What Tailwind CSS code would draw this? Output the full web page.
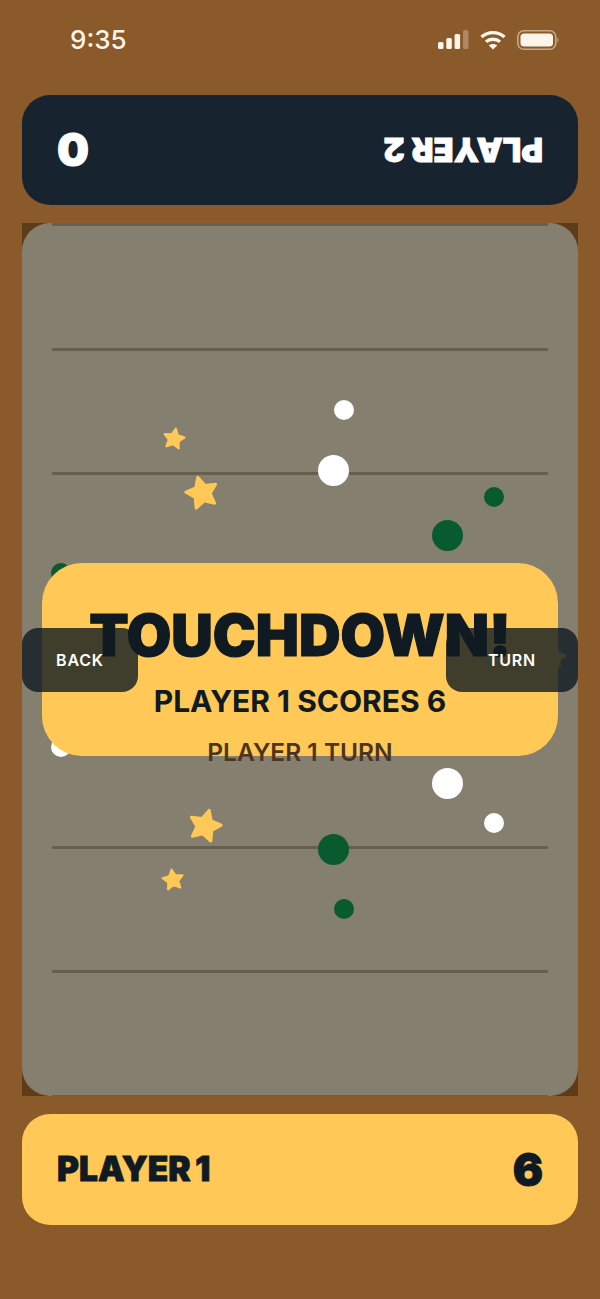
<!DOCTYPE html>
<html lang="en">
<head>
    <meta charset="UTF-8">
    <meta name="viewport" content="width=device-width, initial-scale=1.0">
    <title>Touchdown</title>
    <script src="https://cdn.jsdelivr.net/npm/@tailwindcss/browser@4"></script>
</head>
<body class="bg-[#8a5a2b] font-['Inter',sans-serif] [font-optical-sizing:none] overflow-hidden">
    <div class="w-[600px] h-[1299px] flex flex-col">
        <!-- status bar -->
        <div class="relative h-[95px] shrink-0 pl-[70px] pt-[25px] text-[#fdf5ea]">
            <span class="text-[26px] leading-[30px] font-medium">9:35</span>
            <div class="absolute left-[438px] top-[30px] flex items-start gap-[11px]">
                <svg width="31" height="19" viewBox="0 0 31 19">
                    <rect x="0" y="12" width="5.500" height="7" rx="1.500" fill="#fdf5ea"/>
                    <rect x="8.300" y="8" width="5.500" height="11" rx="1.500" fill="#fdf5ea"/>
                    <rect x="16.600" y="4" width="5.500" height="15" rx="1.500" fill="#fdf5ea"/>
                    <rect x="25" y="0" width="5.500" height="19" rx="1.500" fill="#fdf5ea" fill-opacity="0.3"/>
                </svg>
                <svg width="26" height="20" viewBox="0 0 26 20" fill="none" stroke="#fdf5ea" stroke-width="3.400">
                    <path d="M1.500 7C8 1.200 18 1.200 24.500 7"/>
                    <path d="M6 11.800C10 8.400 16 8.400 20 11.800"/>
                    <path d="M13 19.500L8.800 15.400C11 13.400 15 13.400 17.200 15.400Z" fill="#fdf5ea" stroke="none"/>
                </svg>
                <svg width="42" height="20" viewBox="0 0 42 20" fill="none">
                    <rect x="0.800" y="0.800" width="38" height="18.400" rx="6" stroke="#fdf5ea" stroke-opacity="0.5" stroke-width="1.600"/>
                    <rect x="3.500" y="3.500" width="32.500" height="13" rx="3.500" fill="#fdf5ea"/>
                    <path d="M40.500 7.500C42 8.200 42 11.800 40.500 12.500Z" fill="#fdf5ea" fill-opacity="0.5"/>
                </svg>
            </div>
        </div>

        <div class="px-[22px] flex flex-col gap-[18px]">
            <!-- player 2 -->
            <div class="h-[110px] rounded-[28px] bg-[#172430] text-white flex items-center justify-between px-[35px] rotate-180">
                <span class="text-[33px] leading-none font-black [-webkit-text-stroke:0.8px_#ffffff]">PLAYER 2</span>
                <span class="text-[45px] leading-none font-black [-webkit-text-stroke:1px_#ffffff]">0</span>
            </div>

            <!-- field -->
            <div class="relative h-[873px] bg-[#5f3c18]">
                <div class="relative h-full rounded-[28px] bg-[#857f6f] overflow-hidden">
                    <div class="h-[875px] flex flex-col justify-between px-[30px]">
                        <div class="h-[3px] bg-[#665f4e]"></div>
                        <div class="h-[3px] bg-[#665f4e]"></div>
                        <div class="h-[3px] bg-[#665f4e]"></div>
                        <div class="h-[3px] bg-[#665f4e]"></div>
                        <div class="h-[3px] bg-[#665f4e]"></div>
                        <div class="h-[3px] bg-[#665f4e]"></div>
                        <div class="h-[3px] bg-[#665f4e]"></div>
                        <div class="h-[3px] bg-[#665f4e]"></div>
                    </div>

                    <!-- markers -->
                    <div class="absolute left-[312px] top-[177px] size-[20px] rounded-full bg-white"></div>
                    <div class="absolute left-[296px] top-[232px] size-[31px] rounded-full bg-white"></div>
                    <div class="absolute left-[462px] top-[264px] size-[20px] rounded-full bg-[#0a5a30]"></div>
                    <div class="absolute left-[410px] top-[297px] size-[31px] rounded-full bg-[#0a5a30]"></div>
                    <div class="absolute left-[29px] top-[340px] size-[20px] rounded-full bg-[#0a5a30]"></div>
                    <div class="absolute left-[29px] top-[514px] size-[20px] rounded-full bg-white"></div>
                    <div class="absolute left-[410px] top-[545px] size-[31px] rounded-full bg-white"></div>
                    <div class="absolute left-[462px] top-[590px] size-[20px] rounded-full bg-white"></div>
                    <div class="absolute left-[296px] top-[611px] size-[31px] rounded-full bg-[#0a5a30]"></div>
                    <div class="absolute left-[312px] top-[676px] size-[20px] rounded-full bg-[#0a5a30]"></div>

                    <!-- stars -->
                    <svg class="absolute left-[138px] top-[202px]" width="28" height="28" viewBox="-14 -14 28 28"><polygon transform="rotate(10) scale(1.150)" points="0,-9.200 2.700,-3.720 8.750,-2.840 4.380,1.420 5.410,7.440 0,4.600 -5.410,7.440 -4.380,1.420 -8.750,-2.840 -2.700,-3.720" fill="#ffc857" stroke="#ffc857" stroke-width="1.800" stroke-linejoin="round"/></svg>
                    <svg class="absolute left-[158px] top-[248px]" width="44" height="44" viewBox="-22 -22 44 44"><polygon transform="rotate(-15) scale(1.750)" points="0,-9.200 2.700,-3.720 8.750,-2.840 4.380,1.420 5.410,7.440 0,4.600 -5.410,7.440 -4.380,1.420 -8.750,-2.840 -2.700,-3.720" fill="#ffc857" stroke="#ffc857" stroke-width="1.800" stroke-linejoin="round"/></svg>
                    <svg class="absolute left-[161px] top-[581px]" width="44" height="44" viewBox="-22 -22 44 44"><polygon transform="rotate(15) scale(1.750)" points="0,-9.200 2.700,-3.720 8.750,-2.840 4.380,1.420 5.410,7.440 0,4.600 -5.410,7.440 -4.380,1.420 -8.750,-2.840 -2.700,-3.720" fill="#ffc857" stroke="#ffc857" stroke-width="1.800" stroke-linejoin="round"/></svg>
                    <svg class="absolute left-[137px] top-[643px]" width="28" height="28" viewBox="-14 -14 28 28"><polygon transform="rotate(-8) scale(1.150)" points="0,-9.200 2.700,-3.720 8.750,-2.840 4.380,1.420 5.410,7.440 0,4.600 -5.410,7.440 -4.380,1.420 -8.750,-2.840 -2.700,-3.720" fill="#ffc857" stroke="#ffc857" stroke-width="1.800" stroke-linejoin="round"/></svg>
                    <svg class="absolute left-[519px] top-[420px]" width="28" height="28" viewBox="-14 -14 28 28"><polygon transform="rotate(10) scale(1.150)" points="0,-9.200 2.700,-3.720 8.750,-2.840 4.380,1.420 5.410,7.440 0,4.600 -5.410,7.440 -4.380,1.420 -8.750,-2.840 -2.700,-3.720" fill="#ffc857" stroke="#ffc857" stroke-width="1.800" stroke-linejoin="round"/></svg>
                </div>

                <!-- touchdown overlay -->
                <div class="absolute left-[20px] right-[20px] top-[340px] h-[193px] rounded-[40px] bg-[#ffc857] flex flex-col items-center pt-[36px] text-[#0f1a22]">
                    <div class="text-[57.500px] leading-[72px] font-black [-webkit-text-stroke:1.2px_#0f1a22]">TOUCHDOWN!</div>
                    <div class="mt-[13px] text-[30px] leading-[34px] font-bold">PLAYER 1 SCORES 6</div>
                </div>
                <div class="absolute left-0 right-0 top-[515px] text-center text-[24.500px] leading-[28px] font-semibold text-[#4c3520]">PLAYER 1 TURN</div>

                <div class="absolute left-0 top-[405px] w-[116px] h-[64px] rounded-[16px] bg-[#0f1a22]/80 flex items-center justify-center text-white text-[16px] font-semibold tracking-[0.8px]">BACK</div>
                <div class="absolute right-0 top-[405px] w-[132px] h-[64px] rounded-[16px] bg-[#0f1a22]/80 flex items-center justify-center text-white text-[16px] font-semibold tracking-[0.8px]">TURN</div>
            </div>

            <!-- player 1 -->
            <div class="h-[111px] rounded-[28px] bg-[#ffc857] text-[#0f1a22] flex items-center justify-between px-[35px]">
                <span class="text-[33.500px] leading-none font-black [word-spacing:-2px] [-webkit-text-stroke:0.8px_#0f1a22]">PLAYER 1</span>
                <span class="text-[45px] leading-none font-black [-webkit-text-stroke:1px_#0f1a22]">6</span>
            </div>
        </div>
    </div>
</body>
</html>
